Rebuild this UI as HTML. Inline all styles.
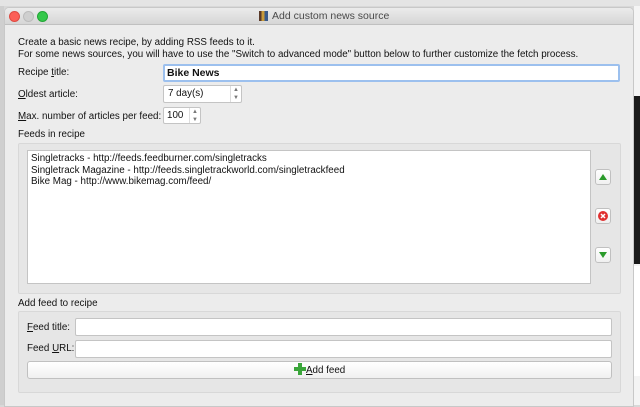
<!DOCTYPE html>
<html><head><style>
*{box-sizing:border-box;margin:0;padding:0}
body{width:640px;height:405px;overflow:hidden;background:#d8d8d8;font-family:"Liberation Sans",sans-serif;font-size:9.8px;color:#111;position:relative}
.a{position:absolute}
.dlg{left:4px;top:7px;width:630px;height:400px;background:#ececec;border-radius:5px 5px 0 0;border:1px solid #c8c8c8;overflow:hidden}
.tb{left:0;top:0;width:630px;height:17px;background:linear-gradient(#ebebeb,#d6d6d6);border-bottom:1px solid #c0c0c0}
.dot{width:11px;height:11px;border-radius:50%;top:3px}
.inp{background:#fff;border:1px solid #c4c4c4}
.grp{background:#e6e6e6;border:1px solid #d8d8d8;border-radius:2px}
.btn{background:linear-gradient(#fff,#f0f0f0);border:1px solid #c0c0c0;border-radius:3px}
u{text-decoration:underline}
</style></head><body>
<div class="a" style="left:0;top:0;width:640px;height:6px;background:#e4e4e4"></div>
<div class="a" style="left:0;top:6px;width:4px;height:399px;background:#cfcfcf"></div>
<div class="a" style="left:634px;top:6px;width:6px;height:399px;background:#f4f4f4"></div>
<div class="a" style="left:634px;top:96px;width:6px;height:168px;background:#1a1a1a"></div>
<div class="a" style="left:634px;top:266px;width:6px;height:110px;background:#fff"></div>
<div class="a dlg">
 <div class="a tb"></div>
 <div class="a dot" style="left:4px;background:#fc5f57;border:1px solid #de4a42"></div>
 <div class="a dot" style="left:18px;background:#cfcfcf;border:1px solid #bcbcbc"></div>
 <div class="a dot" style="left:32px;background:#34c84a;border:1px solid #22a636"></div>
 <div class="a" style="left:254px;top:3px;width:9px;height:10px;background:linear-gradient(90deg,#5a3a2a 30%,#c89a3a 30% 60%,#3a5a8a 60%)"></div>
 <div class="a" style="left:267px;top:2px;font-size:10.5px;color:#4a4a4a">Add custom news source</div>
 <div class="a" style="left:13px;top:29px">Create a basic news recipe, by adding RSS feeds to it.</div>
 <div class="a" style="left:13px;top:41px">For some news sources, you will have to use the "Switch to advanced mode" button below to further customize the fetch process.</div>
 <div class="a" style="left:13px;top:59px">Recipe <u>t</u>itle:</div>
 <div class="a inp" style="left:158px;top:56px;width:457px;height:18px;border:2px solid #9cc0ee;border-radius:2px;font-weight:bold;padding:1px 0 0 2px;font-size:10.5px">Bike News</div>
 <div class="a" style="left:13px;top:81px"><u>O</u>ldest article:</div>
 <div class="a inp" style="left:158px;top:77px;width:79px;height:18px;padding:2px 0 0 4px;border-radius:2px">7 day(s)<span class="a" style="left:66px;top:0;width:1px;height:16px;background:#ddd"></span><span class="a" style="left:69px;top:0;font-size:6px;color:#777;line-height:8px">▲<br>▼</span></div>
 <div class="a" style="left:13px;top:103px"><u>M</u>ax. number of articles per feed:</div>
 <div class="a inp" style="left:158px;top:99px;width:38px;height:17px;padding:2px 0 0 3px;border-radius:2px">100<span class="a" style="left:25px;top:0;width:1px;height:15px;background:#ddd"></span><span class="a" style="left:28px;top:0;font-size:6px;color:#777;line-height:8px">▲<br>▼</span></div>
 <div class="a" style="left:13px;top:121px">Feeds in recipe</div>
 <div class="a grp" style="left:13px;top:135px;width:603px;height:151px"></div>
 <div class="a inp" style="left:22px;top:142px;width:564px;height:134px;padding:2px 0 0 3px;line-height:11.6px">Singletracks - http://feeds.feedburner.com/singletracks<br>Singletrack Magazine - http://feeds.singletrackworld.com/singletrackfeed<br>Bike Mag - http://www.bikemag.com/feed/</div>
 <div class="a btn" style="left:590px;top:161px;width:16px;height:16px"><svg width="14" height="14"><path d="M3 10 L11 10 L7 4Z" fill="#2a9a2a"/></svg></div>
 <div class="a btn" style="left:590px;top:200px;width:16px;height:16px"><svg width="14" height="14"><circle cx="7" cy="7" r="5" fill="#e03030"/><path d="M5 5L9 9M9 5L5 9" stroke="#fff" stroke-width="1.5"/></svg></div>
 <div class="a btn" style="left:590px;top:239px;width:16px;height:16px"><svg width="14" height="14"><path d="M3 4 L11 4 L7 10Z" fill="#2a9a2a"/></svg></div>
 <div class="a" style="left:13px;top:290px">Add feed to recipe</div>
 <div class="a grp" style="left:13px;top:303px;width:603px;height:82px"></div>
 <div class="a" style="left:22px;top:314px"><u>F</u>eed title:</div>
 <div class="a inp" style="left:70px;top:310px;width:537px;height:18px;border-radius:2px"></div>
 <div class="a" style="left:22px;top:335px">Feed <u>U</u>RL:</div>
 <div class="a inp" style="left:70px;top:332px;width:537px;height:18px;border-radius:2px"></div>
 <div class="a btn" style="left:22px;top:353px;width:585px;height:18px"></div>
 <div class="a" style="left:289px;top:355px"><svg width="12" height="12" style="vertical-align:-2px"><path d="M4 0h4v4h4v4h-4v4h-4v-4h-4v-4h4z" fill="#3aa53a"/></svg><u>A</u>dd feed</div>
</div>
</body></html>
